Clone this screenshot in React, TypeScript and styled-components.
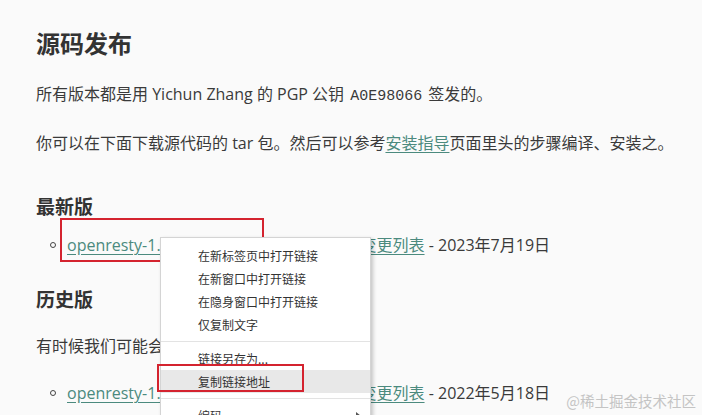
import React from 'react';
import styled, { createGlobalStyle } from 'styled-components';

const GlobalStyle = createGlobalStyle`
  html, body {
    margin: 0;
    padding: 0;
    background: #fafafa;
  }
  body {
    font-family: "Open Sans", "Noto Sans CJK SC", sans-serif;
    color: #3a3a3a;
  }
`;

const Page = styled.div`
  position: relative;
  width: 702px;
  height: 415px;
  overflow: hidden;
  padding: 0 36px;
  box-sizing: border-box;
  background: #fafafa;
`;

const Title = styled.h1`
  margin: 28px 0 0;
  font-size: 24px;
  line-height: 32px;
  font-weight: 700;
  color: #333;
`;

const Para = styled.p<{ $gap: number }>`
  margin: ${(p) => p.$gap}px 0 0;
  font-size: 16px;
  line-height: 26px;
  white-space: nowrap;
`;

const SubTitle = styled.h3<{ $gap: number }>`
  margin: ${(p) => p.$gap}px 0 0;
  font-size: 19px;
  line-height: 28px;
  font-weight: 700;
  color: #333;
`;

const List = styled.ul<{ $gap: number }>`
  list-style: none;
  margin: ${(p) => p.$gap}px 0 0;
  padding: 0 0 0 14px;
`;

const Item = styled.li`
  display: flex;
  align-items: center;
  font-size: 16px;
  line-height: 26px;
  white-space: nowrap;

  &::before {
    content: '';
    width: 4px;
    height: 4px;
    border: 1.5px solid #444;
    border-radius: 50%;
    margin-right: 11px;
    flex: none;
  }
`;

const Link = styled.a`
  color: #4b8a7e;
  text-decoration: underline;
  text-underline-offset: 3px;
`;

const Code = styled.code`
  font-family: "Liberation Mono", "DejaVu Sans Mono", monospace;
  font-size: 15px;
  margin: 0 6px;
`;

const Menu = styled.div`
  position: absolute;
  left: 160px;
  top: 237px;
  width: 209px;
  padding: 6px 0;
  background: #ffffff;
  border: 1px solid #d4d4d4;
  box-shadow: 2px 2px 4px rgba(0, 0, 0, 0.22);
  font-family: "Noto Sans CJK SC", "Open Sans", sans-serif;
  font-size: 12px;
  color: #333;
`;

const MenuItem = styled.div<{ $active?: boolean }>`
  position: relative;
  height: 23px;
  line-height: 23px;
  padding-left: 37px;
  background: ${(p) => (p.$active ? '#e8e8e8' : 'transparent')};
`;

const Separator = styled.div`
  height: 1px;
  margin: 5px 0;
  background: #e3e3e3;
`;

const Arrow = styled.span`
  position: absolute;
  right: 9px;
  top: 8px;
  width: 0;
  height: 0;
  border-top: 4px solid transparent;
  border-bottom: 4px solid transparent;
  border-left: 5px solid #555;
`;

const Highlight = styled.div<{ $left: number; $top: number; $w: number; $h: number }>`
  position: absolute;
  left: ${(p) => p.$left}px;
  top: ${(p) => p.$top}px;
  width: ${(p) => p.$w}px;
  height: ${(p) => p.$h}px;
  border: 2px solid #d4232f;
  box-sizing: border-box;
  pointer-events: none;
`;

const Watermark = styled.div`
  position: absolute;
  right: 6px;
  bottom: 4px;
  font-family: "Noto Sans CJK SC", serif;
  font-size: 14.5px;
  color: #c4c4c4;
`;

const releases = [
  { file: 'openresty-1.21.4.2.tar.gz', size: '5.3MB', date: '2023年7月19日' },
];
const olds = [
  { file: 'openresty-1.19.9.1.tar.gz', size: '5.1MB', date: '2022年5月18日' },
];

const Release = ({ file, size, date }: { file: string; size: string; date: string }) => (
  <Item>
    <Link href="#">{file}</Link>
    &nbsp;{size}&nbsp;-&nbsp;<Link href="#">PGP</Link>&nbsp;-&nbsp;
    <Link href="#">变更列表</Link>&nbsp;- {date}
  </Item>
);

const App: React.FC = () => {
  return (
    <>
      <GlobalStyle />
      <Page>
        <Title>源码发布</Title>
        <Para $gap={21}>
          所有版本都是用 Yichun Zhang 的 PGP 公钥<Code>A0E98066</Code>签发的。
        </Para>
        <Para $gap={20}>
          你可以在下面下载源代码的 tar 包。然后可以参考<Link href="#">安装指导</Link>页面里头的步骤编译、安装之。
        </Para>
        <SubTitle $gap={37}>最新版</SubTitle>
        <List $gap={11}>
          {releases.map((r) => (
            <Release key={r.file} {...r} />
          ))}
        </List>
        <SubTitle $gap={28}>历史版</SubTitle>
        <Para $gap={19}>有时候我们可能会需要旧版本。</Para>
        <List $gap={21}>
          {olds.map((r) => (
            <Release key={r.file} {...r} />
          ))}
        </List>

        <Highlight $left={60} $top={218} $w={204} $h={44} />

        <Menu>
          <MenuItem>在新标签页中打开链接</MenuItem>
          <MenuItem>在新窗口中打开链接</MenuItem>
          <MenuItem>在隐身窗口中打开链接</MenuItem>
          <MenuItem>仅复制文字</MenuItem>
          <Separator />
          <MenuItem>链接另存为...</MenuItem>
          <MenuItem $active>复制链接地址</MenuItem>
          <Separator />
          <MenuItem>
            编码
            <Arrow />
          </MenuItem>
        </Menu>

        <Highlight $left={157} $top={364} $w={147} $h={28} />

        <Watermark>@稀土掘金技术社区</Watermark>
      </Page>
    </>
  );
};

export default App;
